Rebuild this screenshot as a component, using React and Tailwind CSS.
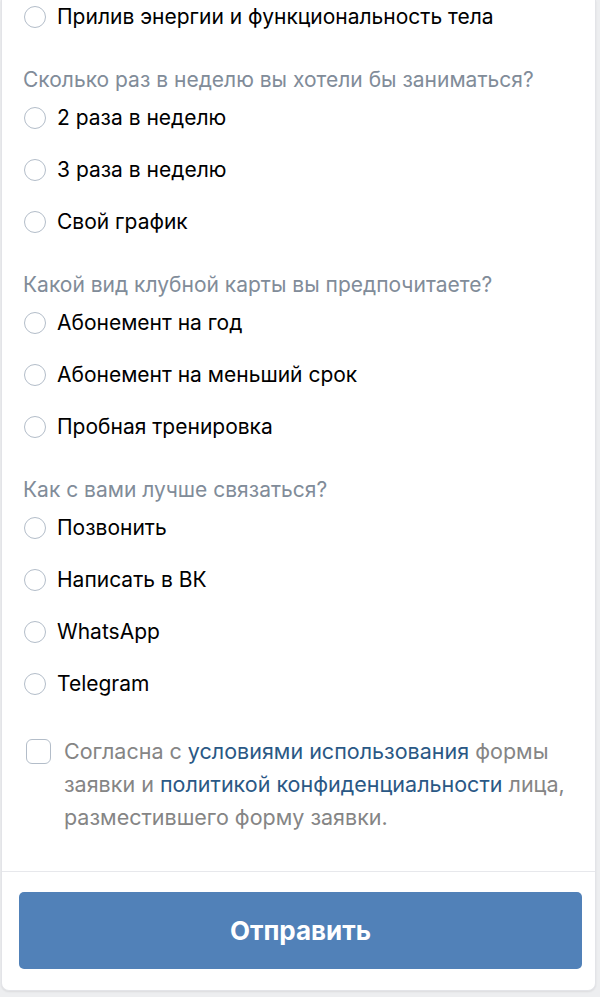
import React from "react";

const font = { fontFamily: "Inter, 'Noto Sans', sans-serif" };

function Radio({ label }) {
  return (
    <div className="flex h-[52px] items-center">
      <span className="ml-[22px] h-[22px] w-[22px] shrink-0 rounded-full border-[1.5px] border-[#b3bdc9] bg-white" />
      <span className="ml-[11px] text-[21px] leading-[26px] text-black">{label}</span>
    </div>
  );
}

function Question({ text }) {
  return (
    <div className="h-[49px] pt-[24px] pl-[21px] text-[21px] leading-[26px] text-[#818c99]">
      {text}
    </div>
  );
}

export default function App() {
  return (
    <div className="min-h-[997px] w-[600px] bg-[#edeef0]" style={font}>
      <div className="ml-[1px] w-[595px] overflow-hidden rounded-b-[8px] border-x border-b border-[#e3e4e8] bg-white shadow-[0_1px_2px_rgba(0,0,0,0.08)]">
        <div className="-mt-[9px]">
          <Radio label="Прилив энергии и функциональность тела" />
          <Question text="Сколько раз в неделю вы хотели бы заниматься?" />
          <Radio label="2 раза в неделю" />
          <Radio label="3 раза в неделю" />
          <Radio label="Свой график" />
          <Question text="Какой вид клубной карты вы предпочитаете?" />
          <Radio label="Абонемент на год" />
          <Radio label="Абонемент на меньший срок" />
          <Radio label="Пробная тренировка" />
          <Question text="Как с вами лучше связаться?" />
          <Radio label="Позвонить" />
          <Radio label="Написать в ВК" />
          <Radio label="WhatsApp" />
          <Radio label="Telegram" />
        </div>
        <div className="flex pt-[25px] pb-[37px]">
          <span className="ml-[24px] mt-[4px] h-[25px] w-[25px] shrink-0 rounded-[6px] border-[1.5px] border-[#b3bdc9] bg-white" />
          <p className="ml-[13px] w-[520px] text-[21.5px] leading-[33px] text-[#858585]">
            Согласна с <span className="text-[#2a5885]">условиями использования</span> формы заявки и{" "}
            <span className="text-[#2a5885]">политикой конфиденциальности</span> лица, разместившего форму заявки.
          </p>
        </div>
        <div className="h-px bg-[#e7e8ec]" />
        <div className="pl-[17px] pr-[13px] pt-[20px] pb-[21px]">
          <button className="flex h-[77px] w-full items-center justify-center rounded-[5px] bg-[#5181b8] text-[26px] font-bold text-white">
            Отправить
          </button>
        </div>
      </div>
    </div>
  );
}
